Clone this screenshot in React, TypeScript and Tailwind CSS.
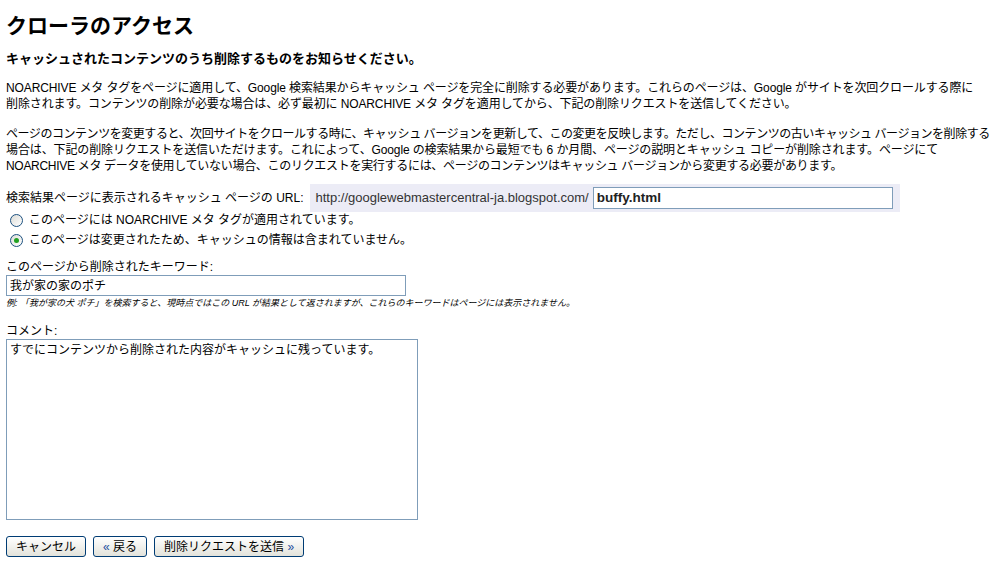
const font = "font-['Liberation_Sans','Noto_Sans_CJK_JP',sans-serif]";

const Button = ({ children }: { children: React.ReactNode }) => (
  <button
    type="button"
    className="h-[21px] rounded-[3px] border border-[#003c74] bg-gradient-to-b from-white to-[#e3e3db] px-[9px] text-[12px] leading-none text-black"
  >
    {children}
  </button>
);

const Radio = ({ checked }: { checked?: boolean }) => (
  <span className="flex h-[13px] w-[13px] items-center justify-center rounded-full border border-[#1c5180] bg-gradient-to-br from-[#dcdcd7] to-white">
    {checked && <span className="h-[5px] w-[5px] rounded-full bg-[#21a121]" />}
  </span>
);

export default function App() {
  return (
    <div className={`${font} min-h-screen bg-white px-[6px] pt-[14px] text-[12px] leading-[16px] text-black`}>
      <h1 className="text-[21px] font-bold leading-[24px]">クローラのアクセス</h1>
      <h2 className="mt-[12px] text-[13px] font-bold leading-[18px]">
        キャッシュされたコンテンツのうち削除するものをお知らせください。
      </h2>

      <p className="mt-[12px] whitespace-nowrap tracking-[-0.12px]">
        NOARCHIVE メタ タグをページに適用して、Google 検索結果からキャッシュ ページを完全に削除する必要があります。これらのページは、Google がサイトを次回クロールする際に
        <br />
        削除されます。コンテンツの削除が必要な場合は、必ず最初に NOARCHIVE メタ タグを適用してから、下記の削除リクエストを送信してください。
      </p>

      <p className="mt-[14px] whitespace-nowrap tracking-[-0.12px]">
        <span className="tracking-[-0.45px]">
          ページのコンテンツを変更すると、次回サイトをクロールする時に、キャッシュ バージョンを更新して、この変更を反映します。ただし、コンテンツの古いキャッシュ バージョンを削除する
        </span>
        <br />
        場合は、下記の削除リクエストを送信いただけます。これによって、Google の検索結果から最短でも 6 か月間、ページの説明とキャッシュ コピーが削除されます。ページにて
        <br />
        <span className="tracking-[-0.3px]">
          NOARCHIVE メタ データを使用していない場合、このリクエストを実行するには、ページのコンテンツはキャッシュ バージョンから変更する必要があります。
        </span>
      </p>

      <div className="mt-[10px] flex items-center">
        <span className="pr-[6px]">検索結果ページに表示されるキャッシュ ページの URL:</span>
        <div className="flex h-[28px] w-[590px] items-center bg-[#ececf6] pl-[6px]">
          <span className="pr-[4px] text-[13px] text-[#333]">http://googlewebmastercentral-ja.blogspot.com/</span>
          <div className="flex h-[22px] w-[300px] items-center border border-[#7f9db9] bg-white px-[3px] text-[13.5px] font-bold text-[#222]">
            buffy.html
          </div>
        </div>
      </div>

      <div className="flex flex-col gap-[4px] pl-[4px]">
        <label className="flex items-center gap-[6px]">
          <Radio />
          <span>このページには NOARCHIVE メタ タグが適用されています。</span>
        </label>
        <label className="flex items-center gap-[6px]">
          <Radio checked />
          <span>このページは変更されたため、キャッシュの情報は含まれていません。</span>
        </label>
      </div>

      <div className="mt-[11px]">このページから削除されたキーワード:</div>
      <div className="flex h-[21px] w-[400px] items-center border border-[#7f9db9] bg-white px-[3px]">
        我が家の家のポチ
      </div>
      <div className="mt-[1px] text-[9px] italic leading-[12px]">
        例: 「我が家の犬 ポチ」を検索すると、現時点ではこの URL が結果として返されますが、これらのキーワードはページには表示されません。
      </div>

      <div className="mt-[14px]">コメント:</div>
      <div className="h-[181px] w-[412px] border border-[#7f9db9] bg-white px-[3px] pt-[2px]">
        すでにコンテンツから削除された内容がキャッシュに残っています。
      </div>

      <div className="mt-[16px] flex gap-[7px]">
        <Button>キャンセル</Button>
        <Button>
          <span className="text-[#1d4ea0]">«</span> 戻る
        </Button>
        <Button>
          削除リクエストを送信 <span className="text-[#1d4ea0]">»</span>
        </Button>
      </div>
    </div>
  );
}
